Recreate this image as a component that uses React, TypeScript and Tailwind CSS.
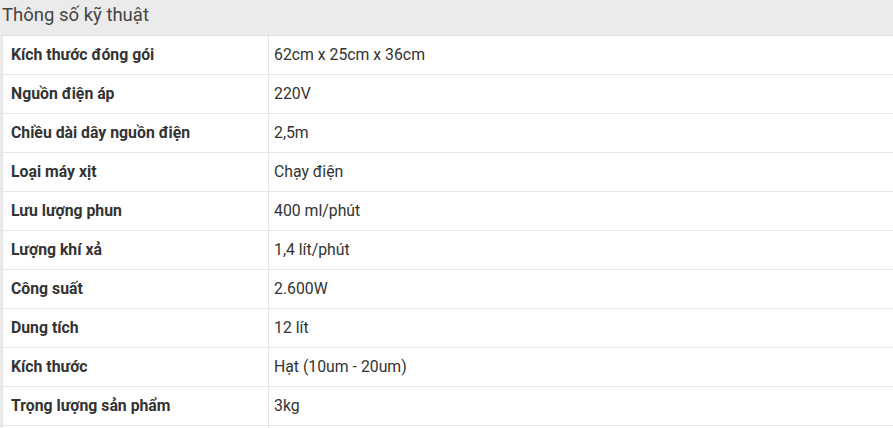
import React from 'react';

const specs: [string, string][] = [
  ['Kích thước đóng gói', '62cm x 25cm x 36cm'],
  ['Nguồn điện áp', '220V'],
  ['Chiều dài dây nguồn điện', '2,5m'],
  ['Loại máy xịt', 'Chạy điện'],
  ['Lưu lượng phun', '400 ml/phút'],
  ['Lượng khí xả', '1,4 lít/phút'],
  ['Công suất', '2.600W'],
  ['Dung tích', '12 lít'],
  ['Kích thước', 'Hạt (10um - 20um)'],
  ['Trọng lượng sản phẩm', '3kg'],
  ['', ''],
];

const App: React.FC = () => {
  return (
    <div className="w-[893px] h-[428px] overflow-hidden bg-[#ebebeb] font-['Roboto',sans-serif] text-[#333]">
      <div className="h-[36px] border-b border-[#dcdcdc] pl-[2px] pt-[3px] text-[18.5px] leading-[24px] text-[#444]">
        Thông số kỹ thuật
      </div>
      <div className="ml-[2px] flex flex-col bg-white text-[15.8px]">
        {specs.map(([label, value], i) => (
          <div key={i} className="flex h-[39px] shrink-0 items-center border-b border-[#e6e6e6]">
            <div className="flex h-full w-[267px] items-center border-l border-r border-[#e6e6e6] pl-[8px] font-bold">
              {label}
            </div>
            <div className="pl-[5px]">{value}</div>
          </div>
        ))}
      </div>
    </div>
  );
};

export default App;
